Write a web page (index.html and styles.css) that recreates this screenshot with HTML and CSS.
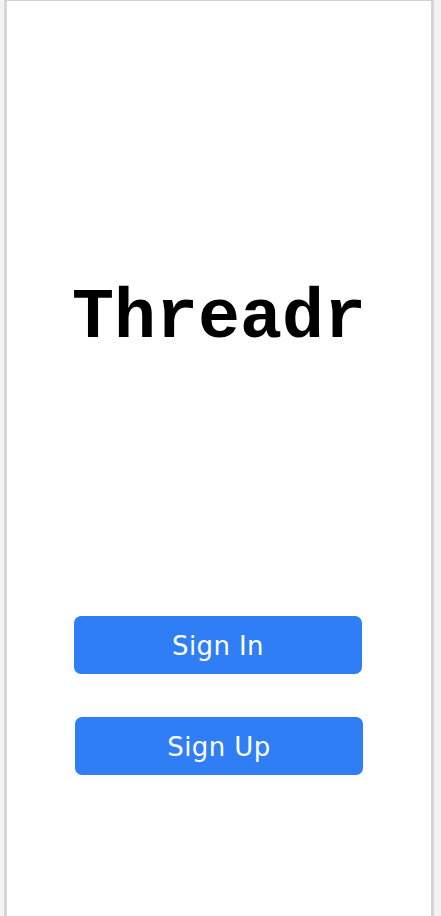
FILE: index.html
```html
<!DOCTYPE html>
<html lang="en">
<head>
<meta charset="utf-8">
<title>Threadr</title>
<link rel="stylesheet" href="styles.css">
</head>
<body>
<div class="frame">
  <div class="hero">
    <h1 class="logo">Threadr</h1>
  </div>
  <div class="actions">
    <button class="btn btn-in">Sign In</button>
    <button class="btn btn-up">Sign Up</button>
  </div>
</div>
</body>
</html>
```

FILE: styles.css
```css
html, body {
  margin: 0;
  padding: 0;
  height: 100%;
}
body {
  background: #f3f3f3;
  padding-left: 4px;
  box-sizing: border-box;
}
.frame {
  width: 430px;
  min-height: 960px;
  box-sizing: border-box;
  background: #ffffff;
  border: 3px solid #d6d6d6;
  border-top: 1px solid #d0d0d0;
  display: flex;
  flex-direction: column;
}
.hero {
  height: 575px;
  display: flex;
  align-items: flex-start;
  justify-content: center;
  padding-top: 278px;
  box-sizing: border-box;
}
.logo {
  margin: 0;
  font-family: "Liberation Mono", "Courier New", monospace;
  font-weight: bold;
  font-size: 70px;
  line-height: 80px;
  color: #000;
}
.actions {
  display: flex;
  flex-direction: column;
  gap: 43px;
  padding-top: 40px;
}
.btn {
  display: block;
  width: 288px;
  height: 58px;
  border: none;
  border-radius: 7px;
  background: #2f7ef5;
  color: #fff;
  font-family: "DejaVu Sans", Verdana, sans-serif;
  font-size: 26px;
  letter-spacing: 0.4px;
  padding: 2px 0 0;
  cursor: pointer;
}
.btn-in { margin-left: 67px; }
.btn-up { margin-left: 68px; }
```
